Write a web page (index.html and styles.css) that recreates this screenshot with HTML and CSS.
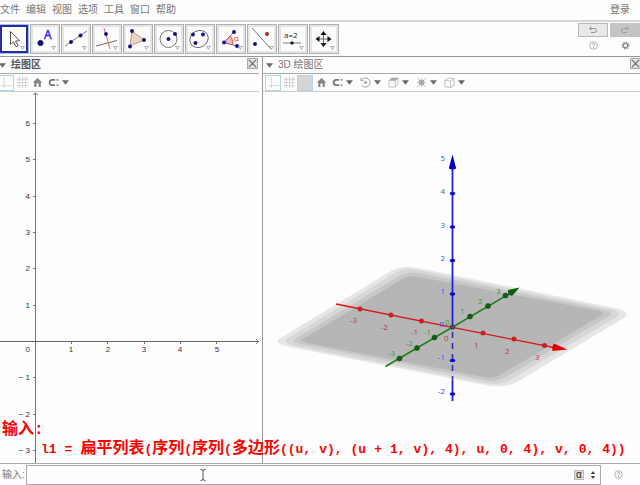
FILE: index.html
```html
<!DOCTYPE html>
<html lang="zh-CN">
<head>
<meta charset="utf-8">
<title>GeoGebra</title>
<link rel="stylesheet" href="styles.css">
</head>
<body>
<svg class="defs" aria-hidden="true">
  <defs>
    <symbol id="corner" viewBox="0 0 6 5"><path d="M.7.6h4.600L3 4.300z" fill="#fff" stroke="#777" stroke-width=".7"/></symbol>
    <symbol id="caret" viewBox="0 0 7 5"><path d="M0 .3h7L3.500 4.700z" fill="#666b69"/></symbol>
    <symbol id="axes" viewBox="0 0 12 12"><path d="M3.500 0v12M0 9.500h12" stroke="#c4c8ca" stroke-width=".8"/></symbol>
    <symbol id="grid" viewBox="0 0 12 12"><path d="M2.500 0v12M6 0v12M9.500 0v12M0 2.500h12M0 6h12M0 9.500h12" stroke="#c3c3c3" stroke-width="1" stroke-dasharray="2 .7"/></symbol>
    <symbol id="home" viewBox="0 0 10 10"><path d="M5 .8 9.300 5H8v4H6V6H4v3H2V5H.7z" fill="#858585"/></symbol>
    <symbol id="magnet" viewBox="0 0 11 10"><path d="M7 2.300H4.300a2.700 2.700 0 0 0 0 5.400H7" fill="none" stroke="#777" stroke-width="1.700"/><path d="M8.500 2.300h2M8.500 7.700h2" stroke="#999" stroke-width="1.700"/></symbol>
    <symbol id="close" viewBox="0 0 10 10"><path d="m1 1 8 8M9 1 1 9" stroke="#666" stroke-width="1.200"/></symbol>
    <symbol id="help" viewBox="0 0 10 10"><circle cx="5" cy="5" r="4.200" fill="none" stroke="#aaa"/><path d="M3.700 4Q3.800 2.700 5 2.700T6.300 4Q6.300 4.600 5 5.500V6M5 6.800v1" fill="none" stroke="#999"/></symbol>
  </defs>
</svg>

<nav class="menu">
  <a href="#">文件</a><a href="#">编辑</a><a href="#">视图</a><a href="#">选项</a><a href="#">工具</a><a href="#">窗口</a><a href="#">帮助</a>
  <a class="login" href="#">登录</a>
</nav>

<header class="toolbar">
  <div class="tools">
    <button class="tool active" aria-label="移动"><svg viewBox="0 0 24 24"><path d="M8.500 4.500v12.800l3-2.600 2.500 5 2-1-2.400-4.700 4-.3z" fill="#fff" stroke="#444" stroke-width=".9"/><use href="#corner" x="18" y="19" width="5" height="4"/></svg></button>
    <button class="tool" aria-label="点"><svg viewBox="0 0 24 24"><circle cx="7.500" cy="16" r="2.600" fill="#00b" stroke="#223"/><text class="letter" x="11" y="12">A</text><use href="#corner" x="18" y="19" width="5" height="4"/></svg></button>
    <button class="tool" aria-label="直线"><svg viewBox="0 0 24 24"><path d="M1 19 23 4" stroke="#555" stroke-width=".8"/><g fill="#00c" stroke="#223" stroke-width=".6"><circle cx="7" cy="15" r="1.700"/><circle cx="16.500" cy="8.500" r="1.700"/></g><use href="#corner" x="18" y="19" width="5" height="4"/></svg></button>
    <button class="tool" aria-label="垂线"><svg viewBox="0 0 24 24"><path d="M1 19 22 13.500" stroke="#444" stroke-width=".8"/><path d="m9 1 6 21" stroke="#f45" stroke-width=".9"/><circle cx="11" cy="7" r="1.700" fill="#00c" stroke="#223" stroke-width=".6"/><use href="#corner" x="18" y="19" width="5" height="4"/></svg></button>
    <button class="tool" aria-label="多边形"><svg viewBox="0 0 24 24"><path d="m6 4 12 9-14 6z" fill="#ebd5c8" stroke="#b77" stroke-width=".8"/><g fill="#00c" stroke="#223" stroke-width=".6"><circle cx="6" cy="4" r="1.700"/><circle cx="18" cy="13" r="1.700"/><circle cx="4" cy="19.500" r="1.700"/></g><use href="#corner" x="18" y="19" width="5" height="4"/></svg></button>
    <button class="tool" aria-label="圆"><svg viewBox="0 0 24 24"><circle cx="11.500" cy="12" r="8.500" fill="none" stroke="#555" stroke-width=".8"/><g fill="#00c" stroke="#223" stroke-width=".6"><circle cx="11.500" cy="12" r="1.700"/><circle cx="18" cy="7" r="1.700"/></g><use href="#corner" x="18" y="19" width="5" height="4"/></svg></button>
    <button class="tool" aria-label="圆锥曲线"><svg viewBox="0 0 24 24"><ellipse cx="11" cy="12" rx="9.500" ry="8.300" transform="rotate(-28 11 12)" fill="none" stroke="#555" stroke-width=".8"/><g fill="#00c" stroke="#223" stroke-width=".6"><circle cx="5" cy="7.500" r="1.700"/><circle cx="15" cy="7.500" r="1.700"/><circle cx="7.500" cy="16" r="1.700"/></g><use href="#corner" x="18" y="19" width="5" height="4"/></svg></button>
    <button class="tool" aria-label="角度"><svg viewBox="0 0 24 24"><path d="m5 15.500 6.500-7q4 4 3 9z" fill="#fbb"/><path d="M11 9q3.500 4 2.500 8.500" fill="none" stroke="#f44" stroke-width=".8"/><path d="M15 5 5 15.500 18 19" fill="none" stroke="#444" stroke-width=".8"/><g fill="#00c" stroke="#223" stroke-width=".6"><circle cx="15" cy="5" r="1.700"/><circle cx="5" cy="15.500" r="1.700"/><circle cx="18" cy="19" r="1.700"/></g><text class="alpha-mark" x="15" y="14">α</text><use href="#corner" x="19" y="19" width="5" height="4"/></svg></button>
    <button class="tool" aria-label="对称"><svg viewBox="0 0 24 24"><path d="m2 1 19 21" stroke="#555" stroke-width=".8"/><circle cx="17" cy="7" r="1.700" fill="#d22" stroke="#422" stroke-width=".6"/><circle cx="5" cy="17" r="1.700" fill="#00c" stroke="#223" stroke-width=".6"/><use href="#corner" x="19" y="19" width="5" height="4"/></svg></button>
    <button class="tool" aria-label="滑动条"><svg viewBox="0 0 24 24"><text class="slider-mark" x="3" y="11">a=2</text><path d="M2 16h18" stroke="#555" stroke-width=".8"/><circle cx="11" cy="16" r="1.700" fill="#222"/><use href="#corner" x="18" y="19" width="5" height="4"/></svg></button>
    <button class="tool" aria-label="移动视图"><svg viewBox="0 0 24 24"><path d="M11.500 6v12M5.500 12h12" stroke="#666" stroke-width="1"/><path d="m11.500 4 3 4h-6zM11.500 20l3-4h-6zM3.500 12l4-3v6zM19.500 12l-4-3v6z" fill="#111"/><use href="#corner" x="18" y="19" width="5" height="4"/></svg></button>
  </div>
  <div class="actions">
    <button class="undo" aria-label="撤销"><svg viewBox="0 0 10 8"><path d="M2 2.500h4.500a2 2 0 0 1 0 4H3M3.500.7 1.500 2.500l2 1.800" fill="none" stroke="#888" stroke-width=".9"/></svg></button>
    <button class="undo redo" aria-label="重做"><svg viewBox="0 0 10 8"><path d="M8 2.500H3.500a2 2 0 0 0 0 4H7M6.500.7l2 1.800-2 1.800" fill="none" stroke="#999" stroke-width=".9"/></svg></button>
    <button class="mini" aria-label="帮助"><svg viewBox="0 0 10 10"><use href="#help"/></svg></button>
    <button class="mini" aria-label="设置"><svg viewBox="0 0 10 10"><circle cx="5" cy="5" r="3.600" fill="none" stroke="#888" stroke-width="1.500" stroke-dasharray="1.400 1.430"/><circle cx="5" cy="5" r="2.400" fill="none" stroke="#888" stroke-width="1.200"/></svg></button>
  </div>
</header>

<main class="views">
  <section class="pane graph">
    <div class="pane-head"><svg class="fold" viewBox="0 0 7 5"><use href="#caret"/></svg><h2>绘图区</h2><button class="close" aria-label="关闭"><svg viewBox="0 0 10 10"><use href="#close"/></svg></button></div>
    <div class="stylebar">
      <button class="style on" aria-label="坐标轴"><svg class="icon" viewBox="0 0 12 12"><use href="#axes"/></svg></button>
      <button class="style" aria-label="网格"><svg class="icon" viewBox="0 0 12 12"><use href="#grid"/></svg></button>
      <button class="style" aria-label="标准视图"><svg class="icon" viewBox="0 0 10 10"><use href="#home"/></svg></button>
      <button class="style drop" aria-label="吸附"><svg class="icon" viewBox="0 0 11 10"><use href="#magnet"/></svg><svg class="caret" viewBox="0 0 7 5"><use href="#caret"/></svg></button>
    </div>
    <svg class="canvas" viewBox="0 92 259 371" preserveAspectRatio="xMinYMin meet">
      <g stroke="#777" stroke-width="1">
        <path d="M35.500 93v370" />
        <path d="M0 341.500h258" stroke="#5c6558"/>
        <path d="M33 123.500h2M33 159.500h2M33 196.500h2M33 232.500h2M33 268.500h2M33 305.500h2M33 377.500h2M33 414.500h2M33 450.500h2M71.500 342v2M107.500 342v2M144.500 342v2M180.500 342v2M216.500 342v2"/>
        <path d="m33 95 2.500-2 2.500 2M256 339l2.500 2.500-2.500 2.500" fill="none"/>
      </g>
      <g class="ticks end">
        <text x="30" y="126">6</text><text x="30" y="162">5</text><text x="30" y="199">4</text><text x="30" y="235">3</text><text x="30" y="271">2</text><text x="30" y="308">1</text><text x="30" y="352">0</text><text x="30" y="380">− 1</text><text x="30" y="417">− 2</text><text x="30" y="453">− 3</text>
      </g>
      <g class="ticks mid">
        <text x="71" y="352">1</text><text x="108" y="352">2</text><text x="144" y="352">3</text><text x="180" y="352">4</text><text x="217" y="352">5</text>
      </g>
    </svg>
  </section>

  <section class="pane space">
    <div class="pane-head"><svg class="fold" viewBox="0 0 7 5"><use href="#caret"/></svg><h2>3D 绘图区</h2><button class="close" aria-label="关闭"><svg viewBox="0 0 10 10"><use href="#close"/></svg></button></div>
    <div class="stylebar">
      <button class="style on" aria-label="坐标轴"><svg class="icon" viewBox="0 0 12 12"><use href="#axes"/></svg></button>
      <button class="style" aria-label="网格"><svg class="icon" viewBox="0 0 12 12"><use href="#grid"/></svg></button>
      <button class="style on plane" aria-label="平面"></button>
      <button class="style" aria-label="标准视图"><svg class="icon" viewBox="0 0 10 10"><use href="#home"/></svg></button>
      <button class="style drop" aria-label="吸附"><svg class="icon" viewBox="0 0 11 10"><use href="#magnet"/></svg><svg class="caret" viewBox="0 0 7 5"><use href="#caret"/></svg></button>
      <button class="style drop" aria-label="旋转"><svg class="icon" viewBox="0 0 12 12"><path d="M2 3a5 5 0 1 1 0 6M1 1v3h3" fill="none" stroke="#999"/><path d="m5 4 3 2-3 2z" fill="#888"/></svg><svg class="caret" viewBox="0 0 7 5"><use href="#caret"/></svg></button>
      <button class="style drop" aria-label="视角"><svg class="icon" viewBox="0 0 12 12"><path d="m1 4 3-3h7v7l-3 3H1zM8 11V4l3-3" fill="#f4f4f4" stroke="#aaa" stroke-width=".7"/><path d="m1 4 3-3h7L8 4z" fill="#aaa"/></svg><svg class="caret" viewBox="0 0 7 5"><use href="#caret"/></svg></button>
      <button class="style drop" aria-label="剪裁"><svg class="icon" viewBox="0 0 12 12"><path d="M3 3h6v6H3z" fill="#aaa"/><path d="m1 1 2 2M11 1 9 3M1 11l2-2M11 11 9 9M6 1v2M6 9v2M1 6h2M9 6h2" stroke="#bbb"/></svg><svg class="caret" viewBox="0 0 7 5"><use href="#caret"/></svg></button>
      <button class="style drop" aria-label="投影"><svg class="icon" viewBox="0 0 12 12"><path d="m1 3.500 4-2.500 6 1v7l-4 2.500-6-1zM1 3.500l6 1 4-2.500M7 4.500v7" fill="none" stroke="#aaa" stroke-width=".8"/></svg><svg class="caret" viewBox="0 0 7 5"><use href="#caret"/></svg></button>
    </div>
    <svg class="canvas" viewBox="263 92 377 371" preserveAspectRatio="xMinYMin meet">
      <path fill="#e6e6e6" d="M279 339Q274 344 290 347L485 385Q503 389 517 382L624 318Q632 312 615 308L418 268Q402 265 391 271Z"/>
      <path fill="#d7d7d7" d="M287 339Q282 343 295 346L485 383Q499 386 510 380L617 317Q623 312 610 309L418 270Q405 267 395 273Z"/>
      <path fill="#c7c7c7" d="M295 339Q290 342 301 344L484 380Q495 383 504 378L609 316Q614 312 605 310L419 273Q408 271 399 276Z"/>
      <path fill="#b6b6b6" d="M303 339Q299 341 307 343L484 377Q491 379 498 376L602 315Q605 313 600 311L419 277Q411 275 404 278Z"/>
      <path d="m336 304 220 44" stroke="#d81818" stroke-width="1.300"/>
      <g fill="#e01818" stroke="#991818" stroke-width=".5"><circle cx="360" cy="309" r="2.200"/><circle cx="391" cy="315" r="2.200"/><circle cx="421.500" cy="321" r="2.200"/><circle cx="483" cy="333" r="2.200"/><circle cx="514" cy="339" r="2.200"/><circle cx="544.500" cy="345.500" r="2.200"/></g>
      <path d="m554 343.500 13.500 6-15 1.500q-1-4 1.500-7.500" fill="#e00000"/>
      <path d="m385.500 366.500 126-74" stroke="#188018" stroke-width="1.500"/>
      <g fill="#106010" stroke="#084008" stroke-width=".5"><circle cx="399.500" cy="358.500" r="2.500"/><circle cx="417" cy="348" r="2.500"/><circle cx="434.500" cy="337.500" r="2.500"/><circle cx="470" cy="316.500" r="2.500"/><circle cx="488" cy="306" r="2.500"/><circle cx="505.500" cy="295.500" r="2.500"/></g>
      <path d="m508 290 11.500-2.500-7 8q-5 1-4.500-5.500" fill="#086008"/>
      <path d="M452.500 167v160M452.500 381v20" stroke="#2020dc" stroke-width="1.800"/>
      <path d="M452.500 332v49" stroke="#3030b0" stroke-width="1.600" stroke-dasharray="6 5"/>
      <path d="m452.500 154.500 3.700 14q-3.700 2-7.400 0z" fill="#0000cc"/>
      <g fill="#0808d0"><ellipse cx="452.500" cy="193.500" rx="2.800" ry="1.700"/><ellipse cx="452.500" cy="227" rx="2.800" ry="1.700"/><ellipse cx="452.500" cy="260.500" rx="2.800" ry="1.700"/><ellipse cx="452.500" cy="294" rx="2.800" ry="1.700"/><ellipse cx="452.500" cy="360.500" rx="2.800" ry="1.700"/><ellipse cx="452.500" cy="394" rx="2.800" ry="1.700"/></g>
      <circle cx="452.500" cy="327" r="2.200" fill="#555" stroke="#303050"/>
      <g class="marks red"><text x="350" y="323">-3</text><text x="381" y="330">-2</text><text x="411" y="335">-1</text><text x="444" y="341">0</text><text x="474" y="348">1</text><text x="505" y="354">2</text><text x="535" y="360">3</text></g>
      <g class="marks green"><text x="388" y="356">-3</text><text x="406" y="346">-2</text><text x="424" y="335">-1</text><text x="445" y="325">0</text><text x="460" y="314">1</text><text x="478" y="304">2</text><text x="496" y="294">3</text></g>
      <g class="marks blue end"><text x="445" y="161">5</text><text x="445" y="194">4</text><text x="445" y="228">3</text><text x="445" y="261">2</text><text x="445" y="294">1</text><text x="444" y="327">0</text><text x="445" y="360">-1</text><text x="445" y="394">-2</text></g>
    </svg>
  </section>

  <div class="caption">
    <p>输入:</p>
    <p class="formula"><code>l1</code> <code>=</code> <code><b>扁平列表</b>(<b>序列</b>(<b>序列</b>(<b>多边形</b>((u,</code> <code>v),</code> <code>(u</code> <code>+</code> <code>1,</code> <code>v),</code> <code>4),</code> <code>u,</code> <code>0,</code> <code>4),</code> <code>v,</code> <code>0,</code> <code>4))</code></p>
  </div>
</main>

<footer class="inputbar">
  <label for="command">输入:</label>
  <div class="field">
    <input id="command" type="text">
    <button class="symbols" aria-label="符号">α</button>
    <button class="history" aria-label="历史"><svg viewBox="0 0 6 10"><path d="m3 1 2.200 3H.8zM3 9l2.200-3H.8z" fill="#444"/></svg></button>
    <svg class="ibeam" viewBox="0 0 6 12"><path d="M.5.5Q3 .5 3 2 3 .5 5.500.5M3 2v8M.5 11.500Q3 11.500 3 10q0 1.500 2.500 1.500" fill="none" stroke="#555"/></svg>
  </div>
  <button class="mini" aria-label="指令帮助"><svg viewBox="0 0 10 10"><use href="#help"/></svg></button>
</footer>
</body>
</html>
```

FILE: styles.css
```css
* { box-sizing: border-box; }

body {
  margin: 0;
  height: 100vh;
  display: flex;
  flex-direction: column;
  overflow: hidden;
  background: #fdfdfd;
  color: #777;
  font: 10px/14px "Liberation Sans", "Noto Sans CJK SC", sans-serif;
}

button {
  display: flex;
  align-items: center;
  justify-content: center;
  padding: 0;
  border: 0;
  background: none;
  font: inherit;
  color: inherit;
}

svg { display: block; }
.defs { position: absolute; width: 0; height: 0; }

.menu {
  display: flex;
  align-items: center;
  gap: 6px;
  height: 22px;
  padding-right: 10px;
  border-bottom: 2px solid #d6d6d6;
}
.menu a { color: #777; text-decoration: none; }
.menu .login { margin-left: auto; }

.toolbar {
  display: flex;
  align-items: center;
  justify-content: space-between;
  height: 35px;
  border-bottom: 1px solid #999;
}
.tools { display: flex; gap: 1px; margin-left: -1px; }
.tool {
  width: 30px;
  height: 30px;
  border: 1px solid #b0b0b0;
  background: #e5e5e5;
}
.tool svg { width: 24px; height: 24px; background: #fdfdfd; }
.tool.active { border-color: #9cc4ea; background: #2a2a9c; }
.letter { font: 12px "Open Sans", sans-serif; fill: #22f; stroke: #22f; stroke-width: .4px; }
.alpha-mark { font: 8px "Open Sans", sans-serif; fill: #f33; }
.slider-mark { font: 8px "Open Sans", sans-serif; fill: #222; }

.actions {
  display: grid;
  grid-template-columns: 30px 30px;
  gap: 3px 2px;
  margin-bottom: 5px;
}
.undo { height: 14px; border: 1px solid #b8b8b8; background: #e8e8e8; }
.redo { border-color: #c4c4c4; background: #c4c4c4; }
.undo svg { width: 10px; height: 8px; }
.mini { height: 10px; }
.mini svg { width: 9px; height: 9px; }

.views {
  position: relative;
  flex: 1;
  min-height: 0;
  display: grid;
  grid-template-columns: minmax(0, 263fr) minmax(0, 377fr);
}
.pane { display: flex; flex-direction: column; min-width: 0; min-height: 0; }
.graph { padding-right: 3px; border-right: 1px solid #999; }

.pane-head {
  display: flex;
  align-items: center;
  height: 17px;
  border-bottom: 1px solid #aaa;
}
.pane-head h2 { margin: 0 auto 0 5px; font-size: 10px; color: #555; }
.space .pane-head { padding-left: 3px; }
.space h2 { font-weight: 400; color: #777; }
.fold { width: 7px; height: 5px; }
.graph .fold { margin-left: -1px; }
.close { width: 11px; height: 11px; margin: 0 1px 3px 0; border: 1px solid #aaa; background: #e2e2e2; }
.space .close { margin-right: -1px; }
.close svg { width: 9px; height: 9px; }

.stylebar {
  display: flex;
  align-items: center;
  gap: 1px;
  height: 18px;
  border-bottom: 1px solid #ccc;
}
.space .stylebar { padding-left: 2px; }
.style { width: 14px; height: 16px; }
.space .on { width: 16px; }
.on { border: 1px solid #aed6f2; }
.graph .on { border-left: 0; }
.plane { background: #d6d6d6; }
.icon { width: 11px; height: 11px; }
.caret { width: 7px; height: 5px; }
.drop { width: 27px; gap: 3px; }

.canvas { width: 100%; flex: 1 1 0; min-height: 0; }
.ticks { font: 8px "Liberation Sans", sans-serif; fill: #333; }
.marks { font: 8px "Open Sans", sans-serif; }
.end { text-anchor: end; }
.mid { text-anchor: middle; }
.red { fill: #b83838; }
.green { fill: #38a038; }
.blue { fill: #4848ff; }

.caption {
  position: absolute;
  left: 2px;
  bottom: 4px;
  color: #f00;
  font: bold 13px/18px "Liberation Mono", "Noto Sans CJK SC", monospace;
}
.caption p { margin: 0; font-size: 16px; }
.caption .formula {
  display: flex;
  align-items: baseline;
  gap: 8px;
  margin-left: 39px;
  font-size: 13px;
  white-space: nowrap;
}
.formula code { font: inherit; }
.formula b { font: bold 16px/14px "Noto Sans CJK SC", sans-serif; }

.inputbar {
  display: flex;
  align-items: center;
  height: 22px;
  border-top: 1px solid #aaa;
}
.inputbar label { width: 26px; padding-left: 2px; }
.field {
  position: relative;
  flex: 1;
  display: flex;
  align-items: center;
  height: 20px;
  border: 1px solid #aaa;
}
.field input { flex: 1; min-width: 0; height: 18px; border: 0; background: none; outline: 0; }
.symbols { width: 10px; height: 10px; background: #ddd; border: 1px solid #bbb; color: #222; }
.history { width: 15px; height: 10px; margin-left: 1px; }
.history svg { width: 6px; height: 10px; }
.ibeam { position: absolute; left: 173px; top: 3px; width: 6px; height: 12px; }
.inputbar .mini { width: 34px; margin-right: 5px; }
```
